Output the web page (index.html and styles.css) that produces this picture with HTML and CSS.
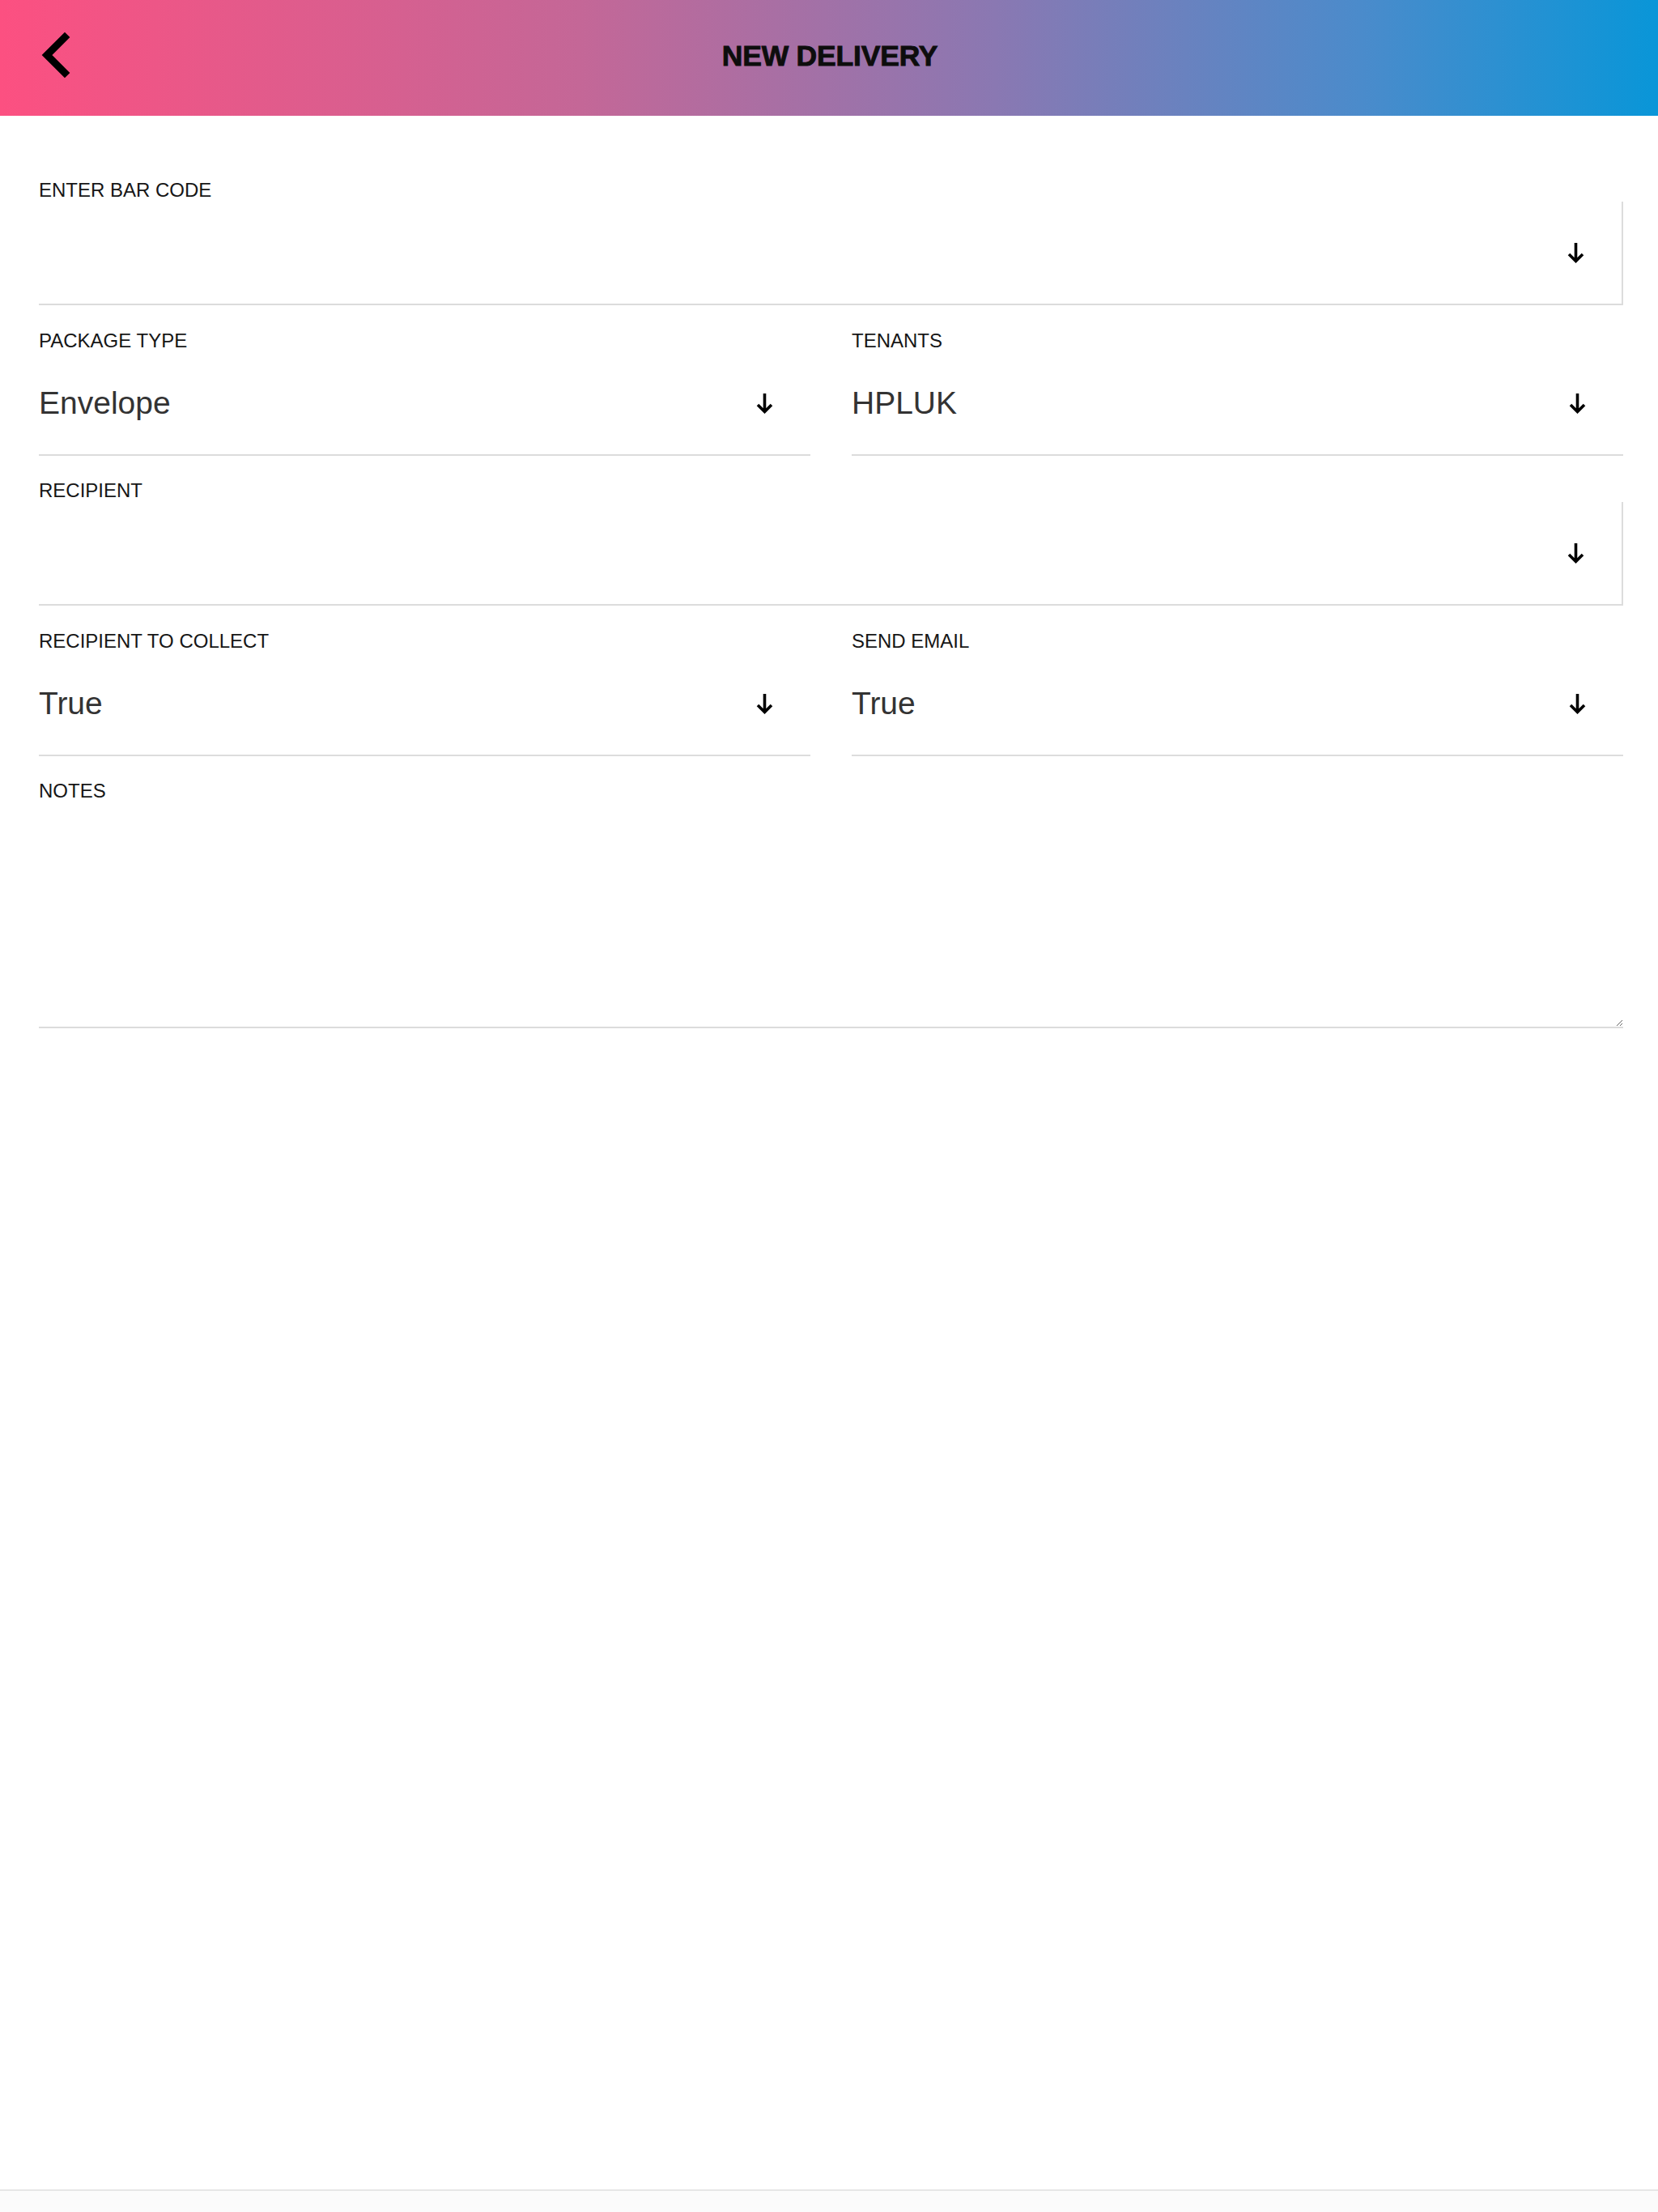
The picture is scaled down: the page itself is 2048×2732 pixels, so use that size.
FILE: index.html
```html
<!DOCTYPE html>
<html lang="en">
<head>
<meta charset="utf-8">
<title>New Delivery</title>
<link rel="stylesheet" href="styles.css">
</head>
<body>
<header class="topbar">
  <div class="topbar-left">
    <a class="back" href="#" aria-label="Back">
      <svg width="40" height="60" viewBox="0 0 40 60"><polyline points="32,8 10,30 32,52" fill="none" stroke="#000" stroke-width="9" stroke-linecap="square" stroke-linejoin="miter"/></svg>
    </a>
  </div>
  <h1 class="title">NEW DELIVERY</h1>
  <div class="topbar-right"></div>
</header>

<main class="form">
  <div class="field full">
    <label class="label">ENTER BAR CODE</label>
    <div class="control boxed">
      <span class="value"></span>
      <svg class="arrow" width="21" height="26" viewBox="0 0 21 26"><path d="M10.5 1 V23.5 M2 15 L10.5 23.5 L19 15" fill="none" stroke="#000" stroke-width="3.6"/></svg>
    </div>
  </div>

  <div class="field">
    <label class="label">PACKAGE TYPE</label>
    <div class="control">
      <span class="value">Envelope</span>
      <svg class="arrow" width="21" height="26" viewBox="0 0 21 26"><path d="M10.5 1 V23.5 M2 15 L10.5 23.5 L19 15" fill="none" stroke="#000" stroke-width="3.6"/></svg>
    </div>
  </div>
  <div class="field">
    <label class="label">TENANTS</label>
    <div class="control">
      <span class="value">HPLUK</span>
      <svg class="arrow" width="21" height="26" viewBox="0 0 21 26"><path d="M10.5 1 V23.5 M2 15 L10.5 23.5 L19 15" fill="none" stroke="#000" stroke-width="3.6"/></svg>
    </div>
  </div>

  <div class="field full">
    <label class="label">RECIPIENT</label>
    <div class="control boxed">
      <span class="value"></span>
      <svg class="arrow" width="21" height="26" viewBox="0 0 21 26"><path d="M10.5 1 V23.5 M2 15 L10.5 23.5 L19 15" fill="none" stroke="#000" stroke-width="3.6"/></svg>
    </div>
  </div>

  <div class="field">
    <label class="label">RECIPIENT TO COLLECT</label>
    <div class="control">
      <span class="value">True</span>
      <svg class="arrow" width="21" height="26" viewBox="0 0 21 26"><path d="M10.5 1 V23.5 M2 15 L10.5 23.5 L19 15" fill="none" stroke="#000" stroke-width="3.6"/></svg>
    </div>
  </div>
  <div class="field">
    <label class="label">SEND EMAIL</label>
    <div class="control">
      <span class="value">True</span>
      <svg class="arrow" width="21" height="26" viewBox="0 0 21 26"><path d="M10.5 1 V23.5 M2 15 L10.5 23.5 L19 15" fill="none" stroke="#000" stroke-width="3.6"/></svg>
    </div>
  </div>

  <div class="field full">
    <label class="label">NOTES</label>
    <textarea class="notes"></textarea>
  </div>
</main>

<footer class="bottombar"></footer>
</body>
</html>
```

FILE: styles.css
```css
html, body {
  margin: 0;
  padding: 0;
}
body {
  min-height: 100vh;
  display: flex;
  flex-direction: column;
  background: #fff;
  font-family: "Liberation Sans", Arial, sans-serif;
  color: #1a1a1a;
}
.topbar {
  height: 143px;
  flex: none;
  display: grid;
  grid-template-columns: 1fr auto 1fr;
  align-items: center;
  background: linear-gradient(90deg, #fc5081 0%, #c46797 35%, #8a78b2 60%, #4b8bcb 82%, #0996d8 100%);
}
.topbar-left {
  padding-left: 48px;
  display: flex;
  align-items: center;
}
.back {
  display: block;
  width: 40px;
  height: 60px;
  margin-top: -7px;
}
.back svg {
  display: block;
}
.title {
  margin: 0 0 6px 0;
  font-size: 35.5px;
  font-weight: 700;
  letter-spacing: -0.2px;
  color: #0d0d0d;
  -webkit-text-stroke: 0.9px #0d0d0d;
  line-height: 40px;
  padding-left: 2px;
}
.form {
  display: grid;
  grid-template-columns: 1fr 1fr;
  column-gap: 51px;
  row-gap: 29.5px;
  padding: 78px 43px 0 48px;
}
.field {
  display: flex;
  flex-direction: column;
  min-width: 0;
}
.field.full {
  grid-column: 1 / -1;
}
.label {
  font-size: 24px;
  line-height: 28px;
  height: 28px;
  color: #161616;
}
.control {
  height: 126px;
  border-bottom: 2px solid #dcdcdc;
  display: flex;
  align-items: center;
  justify-content: space-between;
  padding-right: 46px;
}
.control.boxed {
  border-right: 2px solid #dcdcdc;
  padding-right: 46px;
}
.value {
  font-size: 39px;
  color: #333;
  line-height: 44px;
}
.arrow {
  display: block;
  flex: none;
}
.notes {
  display: block;
  width: 100%;
  box-sizing: border-box;
  height: 279px;
  margin: 0;
  padding: 0;
  border: none;
  border-bottom: 2px solid #dcdcdc;
  outline: none;
  resize: vertical;
  background: transparent;
  font-family: "Liberation Sans", Arial, sans-serif;
  font-size: 39px;
}
.bottombar {
  margin-top: auto;
  height: 26px;
  flex: none;
  border-top: 2px solid #e6e6e6;
  background: #fbfbfb;
}
```
